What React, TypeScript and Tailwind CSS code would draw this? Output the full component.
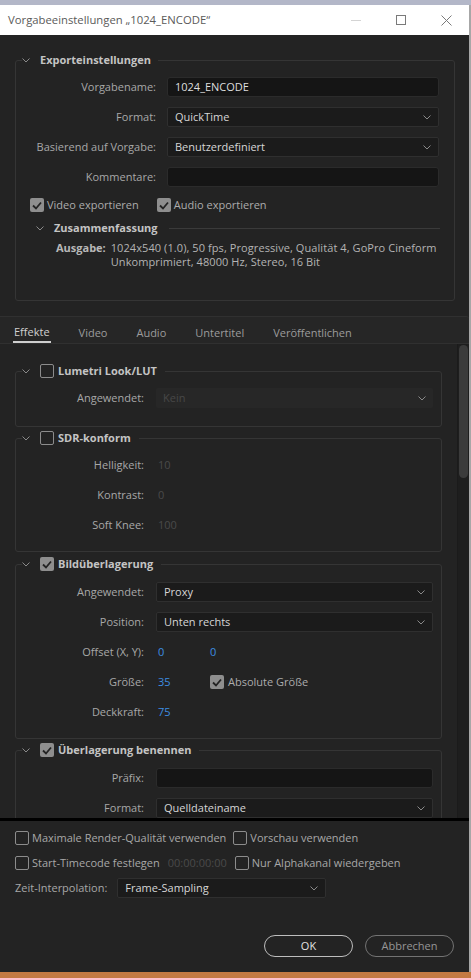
import React from 'react';

function Chevron({ className = '' }: { className?: string }) {
  return (
    <svg width="8" height="5" viewBox="0 0 8 5" className={className}>
      <polyline points="0.5,0.5 4,4 7.5,0.5" fill="none" stroke="#8a8a8a" strokeWidth="1" />
    </svg>
  );
}

function Check({ checked, dim = false }: { checked: boolean; dim?: boolean }) {
  if (checked) {
    return (
      <span className="flex w-[14px] h-[14px] shrink-0 items-center justify-center rounded-[2px] bg-[#8e8e8e]">
        <svg width="10" height="9" viewBox="0 0 10 9">
          <polyline points="1,4.5 4,7.5 9,1.5" fill="none" stroke="#232323" strokeWidth="1.8" />
        </svg>
      </span>
    );
  }
  return (
    <span
      className={`block w-[14px] h-[14px] shrink-0 rounded-[2px] border-[1.5px] ${
        dim ? 'border-[#7a7a7a]' : 'border-[#8c8c8c]'
      }`}
    />
  );
}

function Select({ value, width, disabled = false }: { value: string; width: string; disabled?: boolean }) {
  return (
    <div
      className={`flex h-[20px] items-center justify-between rounded-[2px] pl-[7px] pr-[7px] ${width} ${
        disabled ? 'bg-[#272727] text-[#474747]' : 'bg-[#1b1b1b] border border-[#2f2f2f] text-[#d6d6d6]'
      }`}
    >
      <span>{value}</span>
      <Chevron />
    </div>
  );
}

function TextBox({ value = '', width }: { value?: string; width: string }) {
  return (
    <div className={`flex h-[20px] items-center rounded-[3px] border border-[#2b2b2b] bg-[#151515] pl-[7px] text-[#dedede] ${width}`}>
      {value}
    </div>
  );
}

function Group({
  title,
  checked,
  children,
  className = '',
}: {
  title: string;
  checked: boolean;
  children: React.ReactNode;
  className?: string;
}) {
  return (
    <fieldset className={`ml-[15px] w-[427px] rounded-[3px] border border-[#353535] ${className}`}>
      <legend className="ml-[6px] flex h-[16px] items-center pr-[8px]">
        <Chevron />
        <span className="ml-[10px]">
          <Check checked={checked} />
        </span>
        <span className="ml-[4px] font-bold text-[#c4c4c4]">{title}</span>
      </legend>
      {children}
    </fieldset>
  );
}

function Row({ label, children }: { label: string; children: React.ReactNode }) {
  return (
    <div className="flex h-[20px] items-center">
      <span className="w-[128px] text-right text-[#a8a8a8]">{label}</span>
      <div className="ml-[12px] flex items-center">{children}</div>
    </div>
  );
}

export default function App() {
  const tabs = ['Effekte', 'Video', 'Audio', 'Untertitel', 'Veröffentlichen'];

  return (
    <div className="flex h-[978px] w-[471px] flex-col overflow-hidden bg-[#a9adbf] font-['Open_Sans','Noto_Sans',sans-serif] text-[11px] leading-[16px]">
      <div className="h-[5px] shrink-0 bg-[#b3b7c8]" />
      <div className="flex min-h-0 flex-1">
        <div className="flex w-[469px] flex-col bg-[#232323]">
          {/* Title bar */}
          <div className="flex h-[30px] shrink-0 items-center bg-white pl-[8px] text-[11.3px] text-[#5a5a5a]">
            <span className="flex-1">Vorgabeeinstellungen „1024_ENCODE“</span>
            <div className="flex items-center">
              <span className="block h-px w-[10px] bg-[#d4d4d4]" />
              <span className="ml-[35px] block h-[10px] w-[10px] border border-[#7a7a7a]" />
              <svg width="11" height="11" viewBox="0 0 11 11" className="ml-[35px] mr-[17px]">
                <path d="M0.5 0.5 L10.5 10.5 M10.5 0.5 L0.5 10.5" stroke="#7a7a7a" strokeWidth="1" />
              </svg>
            </div>
          </div>

          {/* Exporteinstellungen */}
          <fieldset className="ml-[15px] mt-[17px] w-[440px] rounded-[3px] border border-[#353535] pb-[31px]">
            <legend className="ml-[6px] flex h-[16px] items-center pr-[7px]">
              <Chevron />
              <span className="ml-[10px] font-bold text-[#c4c4c4]">Exporteinstellungen</span>
            </legend>
            <div className="mt-[9px] flex flex-col gap-[10px]">
              <div className="flex h-[20px] items-center">
                <span className="w-[140px] text-right text-[#a8a8a8]">Vorgabename:</span>
                <div className="ml-[11px]">
                  <TextBox value="1024_ENCODE" width="w-[272px]" />
                </div>
              </div>
              <div className="flex h-[20px] items-center">
                <span className="w-[140px] text-right text-[#a8a8a8]">Format:</span>
                <div className="ml-[11px]">
                  <Select value="QuickTime" width="w-[272px]" />
                </div>
              </div>
              <div className="flex h-[20px] items-center">
                <span className="w-[140px] text-right text-[#a8a8a8]">Basierend auf Vorgabe:</span>
                <div className="ml-[11px]">
                  <Select value="Benutzerdefiniert" width="w-[272px]" />
                </div>
              </div>
              <div className="flex h-[20px] items-center">
                <span className="w-[140px] text-right text-[#a8a8a8]">Kommentare:</span>
                <div className="ml-[11px]">
                  <TextBox width="w-[272px]" />
                </div>
              </div>
            </div>
            <div className="mt-[11px] flex h-[14px] items-center pl-[14px] text-[#acacac]">
              <Check checked />
              <span className="ml-[3px]">Video exportieren</span>
              <span className="ml-[18px]">
                <Check checked />
              </span>
              <span className="ml-[3px]">Audio exportieren</span>
            </div>
            <div className="mt-[8px] flex h-[16px] items-center pl-[20px]">
              <Chevron />
              <span className="ml-[10px] font-bold text-[#c4c4c4]">Zusammenfassung</span>
              <span className="ml-[11px] mr-[14px] h-px flex-1 bg-[#3a3a3a]" />
            </div>
            <div className="mt-[5px] flex pl-[40px] leading-[14px]">
              <span className="font-bold text-[#b8b8b8]">Ausgabe:</span>
              <span className="ml-[5px] tracking-[0.08px] text-[#b4b4b4]">
                1024x540 (1.0), 50 fps, Progressive, Qualität 4, GoPro Cineform
                <br />
                Unkomprimiert, 48000 Hz, Stereo, 16 Bit
              </span>
            </div>
          </fieldset>

          {/* Tabs */}
          <div className="mt-[15px] flex h-[28px] shrink-0 rounded-tr-[3px] border-y border-[#303030] bg-[#262626] pl-[13px]">
            {tabs.map((t, i) => (
              <div
                key={t}
                className={`flex items-center px-[1px] pt-[5px] ${i > 0 ? 'ml-[27px]' : ''} ${
                  i === 0 ? 'border-b-2 border-[#cfcfcf] text-[#d0d0d0]' : 'text-[#9c9c9c]'
                }`}
              >
                {t}
              </div>
            ))}
          </div>

          {/* Effects scroll area */}
          <div className="flex h-[474px] shrink-0 overflow-hidden">
            <div className="min-w-0 flex-1 pt-[19px]">
              <Group title="Lumetri Look/LUT" checked={false} className="pb-[18px]">
                <div className="mt-[9px]">
                  <Row label="Angewendet:">
                    <Select value="Kein" width="w-[277px]" disabled />
                  </Row>
                </div>
              </Group>

              <Group title="SDR-konform" checked={false} className="mt-[3px] pb-[16px]">
                <div className="mt-[9px] flex flex-col gap-[10px]">
                  <Row label="Helligkeit:">
                    <span className="ml-[2px] text-[#4a4a4a]">10</span>
                  </Row>
                  <Row label="Kontrast:">
                    <span className="ml-[2px] text-[#4a4a4a]">0</span>
                  </Row>
                  <Row label="Soft Knee:">
                    <span className="ml-[2px] text-[#4a4a4a]">100</span>
                  </Row>
                </div>
              </Group>

              <Group title="Bildüberlagerung" checked className="mt-[4px] pb-[16px]">
                <div className="mt-[10px] flex flex-col gap-[10px]">
                  <Row label="Angewendet:">
                    <Select value="Proxy" width="w-[277px]" />
                  </Row>
                  <Row label="Position:">
                    <Select value="Unten rechts" width="w-[277px]" />
                  </Row>
                  <Row label="Offset (X, Y):">
                    <span className="ml-[2px] w-[52px] text-[#3d8ee2]">0</span>
                    <span className="text-[#3d8ee2]">0</span>
                  </Row>
                  <Row label="Größe:">
                    <span className="ml-[2px] w-[52px] text-[#3d8ee2]">35</span>
                    <Check checked />
                    <span className="ml-[4px] text-[#acacac]">Absolute Größe</span>
                  </Row>
                  <Row label="Deckkraft:">
                    <span className="ml-[2px] text-[#3d8ee2]">75</span>
                  </Row>
                </div>
              </Group>

              <Group title="Überlagerung benennen" checked className="mt-[3px] pb-[16px]">
                <div className="mt-[10px] flex flex-col gap-[10px]">
                  <Row label="Präfix:">
                    <TextBox width="w-[277px]" />
                  </Row>
                  <Row label="Format:">
                    <Select value="Quelldateiname" width="w-[277px]" />
                  </Row>
                </div>
              </Group>
            </div>
            <div className="flex w-[12px] shrink-0 flex-col border-l border-[#1b1b1b] bg-[#1e1e1e] pl-[1px] pr-[1px] pt-px">
              <div className="h-[133px] rounded-full bg-[#3b3b3b]" />
            </div>
          </div>

          <div className="h-[3px] shrink-0 bg-black" />

          {/* Bottom options */}
          <div className="flex flex-1 flex-col px-[15px] text-[#a8a8a8]">
            <div className="mt-[10px] flex h-[14px] items-center">
              <Check checked={false} />
              <span className="ml-[3px]">Maximale Render-Qualität verwenden</span>
              <span className="ml-[7px]">
                <Check checked={false} />
              </span>
              <span className="ml-[3px]">Vorschau verwenden</span>
            </div>
            <div className="mt-[11px] flex h-[14px] items-center">
              <Check checked={false} />
              <span className="ml-[3px]">Start-Timecode festlegen</span>
              <span className="ml-[8px] text-[#4a4a4a]">00:00:00:00</span>
              <span className="ml-[8px]">
                <Check checked={false} />
              </span>
              <span className="ml-[3px]">Nur Alphakanal wiedergeben</span>
            </div>
            <div className="mt-[8px] flex h-[20px] items-center">
              <span>Zeit-Interpolation:</span>
              <div className="ml-[10px]">
                <Select value="Frame-Sampling" width="w-[209px]" />
              </div>
            </div>
            <div className="mt-[37px] flex justify-end">
              <button className="h-[22px] w-[89px] rounded-full border border-[#bdbdbd] text-[#e2e2e2]">OK</button>
              <button className="ml-[12px] h-[22px] w-[89px] rounded-full border border-[#737373] text-[#969696]">
                Abbrechen
              </button>
            </div>
          </div>
        </div>
        <div className="w-[2px] bg-[#a7a7a7]" />
      </div>
      <div className="h-[6px] shrink-0 bg-[#c47a42]" />
    </div>
  );
}
